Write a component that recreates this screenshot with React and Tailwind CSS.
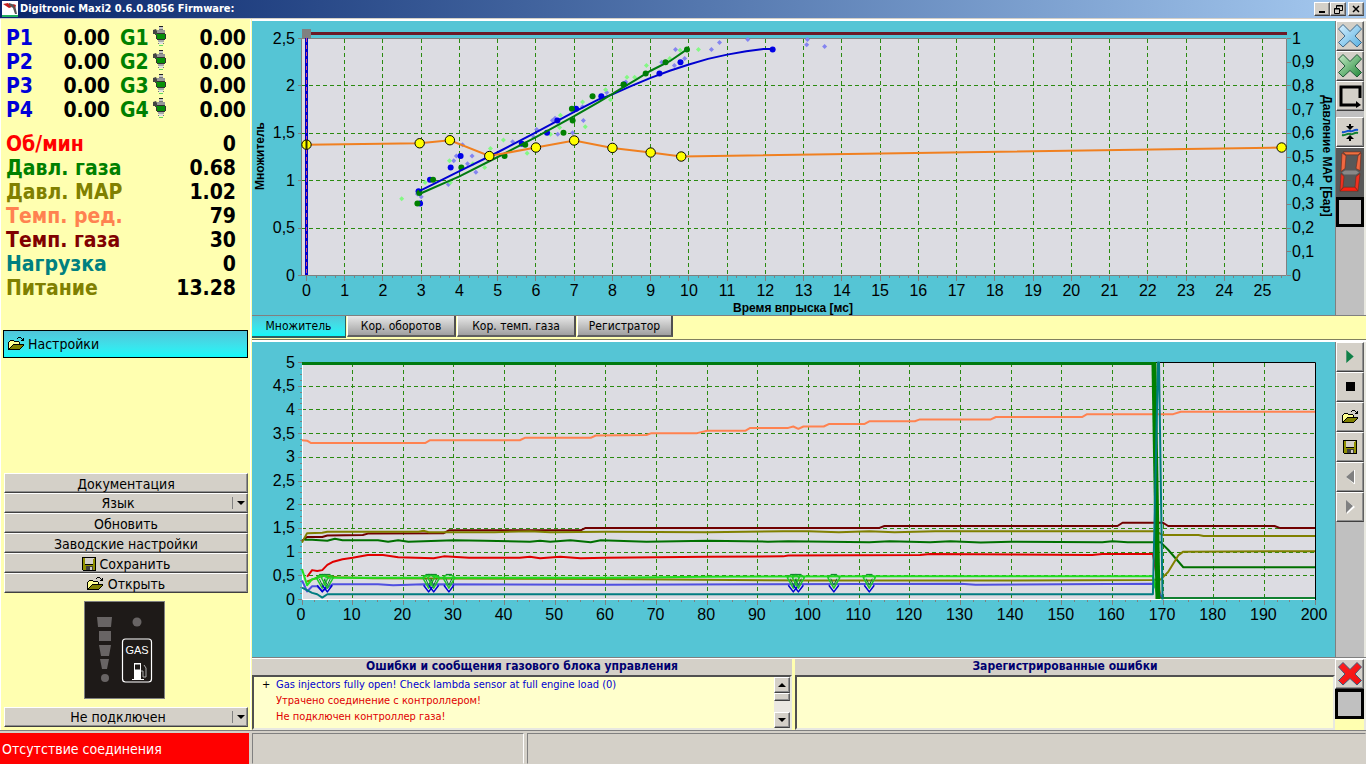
import { useState } from 'react';

const cylinders = [1, 2, 3, 4];

const readings = [
  { label: 'Об/мин', value: '0', color: 'text-[#ff0000]' },
  { label: 'Давл. газа', value: '0.68', color: 'text-[#008000]' },
  { label: 'Давл. MAP', value: '1.02', color: 'text-[#808000]' },
  { label: 'Темп. ред.', value: '79', color: 'text-[#ff8250]' },
  { label: 'Темп. газа', value: '30', color: 'text-[#800000]' },
  { label: 'Нагрузка', value: '0', color: 'text-[#008080]' },
  { label: 'Питание', value: '13.28', color: 'text-[#808000]' },
];

const tabs = [
  { name: 'Множитель', width: 'w-[94px]' },
  { name: 'Кор. оборотов', width: 'w-[109px]' },
  { name: 'Кор. темп. газа', width: 'w-[119px]' },
  { name: 'Регистратор', width: 'w-24' },
];

// Multiplier chart, [injection time, multiplier]
const multiplier = [
  [0, 1.38], [2.96, 1.395], [3.75, 1.427], [4.78, 1.26], [6, 1.35],
  [7, 1.424], [8, 1.346], [9, 1.297], [9.8, 1.255], [25.5, 1.35],
];
const petrolLine = [
  [2.95, 0.89], [4, 1.1], [5, 1.3], [6, 1.51], [7, 1.725], [7.64, 1.857], [8, 1.91],
  [8.5, 2.0], [9, 2.085], [9.5, 2.16], [10, 2.225], [10.5, 2.285], [11, 2.33], [11.5, 2.365], [11.95, 2.39], [12.2, 2.39],
];
const gasLine = [
  [2.95, 0.86], [4, 1.045], [5, 1.25], [6, 1.46], [7, 1.68], [7.64, 1.83],
  [8, 1.915], [8.3, 1.99], [8.6, 2.06], [9, 2.16], [9.5, 2.26], [9.95, 2.385],
];
const petrolDots = [
  [2.97, 0.76], [2.93, 0.89], [3.23, 1.01], [3.77, 1.14], [4.03, 1.26], [5.63, 1.39], [6.29, 1.505],
  [6.56, 1.635], [7.05, 1.758], [7.71, 1.89], [8.3, 2.015], [9.23, 2.13], [9.78, 2.25], [12.19, 2.385],
];
const gasDots = [
  [2.9, 0.76], [2.95, 0.87], [3.31, 1.01], [4.05, 1.14], [5.18, 1.26], [5.72, 1.38], [6.72, 1.505],
  [6.96, 1.635], [6.94, 1.758], [7.48, 1.89], [8.29, 2.015], [8.87, 2.13], [9.39, 2.25], [9.95, 2.385],
];
const petrolRaw = [
  [2.9, 0.86], [3, 0.83], [3.71, 0.96], [3.85, 1.21], [3.92, 1.26], [4.08, 1.38], [4.33, 1.26], [4.21, 1.18],
  [4.43, 1.09], [5.39, 1.41], [5.94, 1.46], [6.02, 1.54], [6.43, 1.635], [6.5, 1.66], [6.57, 1.49], [6.96, 1.505],
  [7.24, 1.635], [7.22, 1.78], [7.85, 1.93], [8.35, 2.04], [9.29, 2.25], [9.62, 2.215], [9.89, 2.29],
  [9.65, 2.385], [10.59, 2.385], [10.8, 2.457], [11.54, 2.49], [13.08, 2.435], [13.1, 2.49], [13.55, 2.415],
];
const gasRaw = [
  [2.49, 0.81], [3.1, 0.98], [3.74, 1.21], [3.76, 0.98], [4.66, 1.14], [4.35, 1.18], [4.81, 1.34], [5.15, 1.43],
  [5.77, 1.29], [6.38, 1.49], [6.62, 1.56], [6.64, 1.69], [7.22, 1.83], [7.29, 1.57], [7.82, 1.96],
  [7.95, 1.855], [8.38, 2.09], [8.58, 2.09], [8.89, 2.215], [9.5, 2.29], [9.77, 2.375], [10.25, 2.385],
];

// Oscilloscope traces, [sample, volts]
const traces = [
  { color: '#ff8250', points: [
    [0, 3.36], [1, 3.35], [1.8, 3.3], [24.3, 3.3], [25.3, 3.36], [32, 3.36], [43, 3.36], [44, 3.41], [57, 3.41],
    [58, 3.46], [68, 3.47], [69, 3.51], [78, 3.51], [80, 3.56], [87.5, 3.56], [88.5, 3.62], [96, 3.62], [97, 3.65],
    [98, 3.6], [99, 3.65], [103, 3.65], [104, 3.7], [111, 3.7], [112, 3.76], [121, 3.76], [122, 3.8], [136, 3.8],
    [137, 3.85], [154, 3.85], [155, 3.91], [172, 3.91], [173.5, 3.96], [200, 3.96],
  ] },
  { color: '#700000', points: [
    [0, 1.24], [1, 1.32], [4, 1.32], [5, 1.35], [12, 1.36], [13, 1.39], [28, 1.4], [29, 1.46], [55, 1.46],
    [56, 1.51], [114, 1.51], [115, 1.55], [161, 1.55], [162, 1.62], [170, 1.62], [171, 1.55], [192, 1.55],
    [193, 1.51], [200, 1.51],
  ] },
  { color: '#808000', points: [
    [0, 1.2], [1, 1.4], [4, 1.41], [5, 1.43], [23, 1.43], [24, 1.45], [25, 1.42], [38, 1.42], [45, 1.44], [49, 1.42],
    [60, 1.43], [80, 1.42], [95, 1.44], [100, 1.44], [106, 1.42], [112, 1.44], [117, 1.42], [125, 1.44],
    [168.5, 1.44], [170, 1.36], [177, 1.36], [178, 1.34], [200, 1.34],
  ] },
  { color: '#007000', points: [
    [0.5, 1.26], [2, 1.26], [5, 1.24], [6.5, 1.28], [8, 1.25], [15, 1.25], [17, 1.22], [19, 1.25], [21, 1.22],
    [30, 1.25], [36, 1.24], [45, 1.22], [47, 1.24], [49, 1.22], [53, 1.25], [57, 1.21], [59, 1.25], [68, 1.22],
    [80, 1.24], [92, 1.22], [96, 1.23], [112, 1.21], [116, 1.23], [124, 1.21], [128, 1.23], [134, 1.2],
    [140, 1.22], [158, 1.21], [160, 1.23], [163, 1.21], [168, 1.21], [169.5, 1.21], [171, 1.05], [174, 0.68], [200, 0.68],
  ] },
  { color: '#e00000', points: [
    [1, 0.48], [2, 0.62], [3, 0.6], [4, 0.62], [5, 0.73], [6, 0.79], [8, 0.85], [10, 0.88], [13, 0.94], [16, 0.94],
    [19, 0.89], [26, 0.87], [28, 0.91], [33, 0.88], [43, 0.88], [45, 0.9], [47, 0.87], [51, 0.9], [55, 0.87],
    [60, 0.88], [80, 0.9], [95, 0.91], [96, 0.93], [122, 0.94], [124, 0.96], [156, 0.94], [158, 0.96], [168, 0.96], [169.5, 0.03],
  ] },
  { color: '#808000', points: [
    [1, 0.38], [2, 0.42], [4, 0.5], [7, 0.47], [14, 0.45], [60, 0.43], [100, 0.4], [140, 0.4], [168, 0.41],
    [169.5, 0.42], [171, 0.58], [173, 0.93], [174, 1.01], [200, 1.02],
  ] },
  { color: '#5050e0', points: [
    [0, 0.4], [1, 0.17], [2, 0.28], [3, 0.28], [4, 0.18], [6, 0.32], [15, 0.32], [18, 0.3], [24, 0.32], [60, 0.31],
    [90, 0.32], [130, 0.33], [133, 0.31], [168, 0.33], [170, 0.02],
  ] },
  { color: '#20e020', points: [
    [0, 0.64], [1, 0.3], [2, 0.43], [3, 0.45], [4, 0.52], [5, 0.46], [24, 0.46], [25, 0.52], [26, 0.5], [27, 0.46],
    [60, 0.46], [80, 0.48], [120, 0.49], [168, 0.49], [169, 0.02],
  ] },
  { color: '#108030', points: [[169.5, 0.03], [200, 0.03]] },
];

const dropouts = [4, 5, 25, 26, 29, 97, 98, 105, 112];

const range = (from, to, step) => {
  const out = [];
  for (let i = 0; from + i * step <= to + step / 10; i++) out.push(from + i * step);
  return out;
};

const comma = (n) => String(Math.round(n * 10) / 10).replace('.', ',');

const toPoints = (data, x, y) => data.map(([a, b]) => `${x(a)},${y(b)}`).join(' ');

// keeps one pixel wide lines on whole pixels
const snap = (n) => Math.floor(n) + 0.5;

const MultiplierChart = () => {
  const x = (v) => 54.5 + v * 38.24;
  const y = (v) => 254.5 - v * 94.8;

  return (
    <svg viewBox="0 0 1083 294" className="block w-full bg-[#55c5d5]" fontFamily="'Liberation Sans', Arial, sans-serif" fontSize="16" role="img" aria-label="Множитель">
      <rect x="50" y="17" width="985" height="238" fill="#dcdce2" />
      <g stroke="#2a8a10" strokeDasharray="4 3">
        {range(1, 25, 1).map((v) => <line key={v} x1={snap(x(v))} x2={snap(x(v))} y1="18" y2="254" />)}
        {range(0.5, 2, 0.5).map((v) => <line key={v} x1="50" x2="1034" y1={snap(y(v))} y2={snap(y(v))} />)}
      </g>
      <g stroke="#808080">
        <path d="M49.5 17.5H1034.5V254.5H49.5Z" fill="none" />
        {range(0, 25.5, 0.25).map((v) => <line key={v} x1={snap(x(v))} x2={snap(x(v))} y1="255" y2={v % 1 ? 257 : 260} />)}
        {range(0, 2.5, 0.5).map((v) => <line key={v} x1="46" x2="50" y1={snap(y(v))} y2={snap(y(v))} />)}
        {range(0, 1, 0.1).map((v) => <line key={v} x1="1035" x2="1039" y1={snap(y(v * 2.5))} y2={snap(y(v * 2.5))} />)}
      </g>
      <g fill="#000">
        {range(0, 25, 1).map((v) => <text key={v} x={x(v)} y="275" textAnchor="middle">{v}</text>)}
        {range(0, 2.5, 0.5).map((v) => <text key={v} x="43" y={y(v) + 5} textAnchor="end">{comma(v)}</text>)}
        {range(0, 1, 0.1).map((v) => <text key={v} x="1040" y={y(v * 2.5) + 5}>{comma(v)}</text>)}
        <g fontSize="12" fontWeight="bold" textAnchor="middle">
          <text x="541" y="291">Время впрыска [мс]</text>
          <text transform="translate(12 135) rotate(-90)">Множитель</text>
          <text transform="translate(1071 135) rotate(90)">Давление MAP [Бар]</text>
        </g>
      </g>
      <rect x="50" y="11" width="985" height="3" fill="#6b1a26" />
      <line x1="54.5" x2="54.5" y1="17" y2="254" stroke="#0000c8" strokeWidth="3" />
      <line x1="54.5" x2="54.5" y1="17" y2="254" stroke="#d05080" strokeDasharray="4 3" />
      <rect x="50" y="8" width="9" height="9" fill="#808080" />
      {petrolRaw.map(([a, b], i) => <path key={i} d={`M${x(a) - 2.5} ${y(b)}l2.5-2.5 2.5 2.5-2.5 2.5z`} fill="#8484f0" />)}
      {gasRaw.map(([a, b], i) => <path key={i} d={`M${x(a) - 2.5} ${y(b)}l2.5-2.5 2.5 2.5-2.5 2.5z`} fill="#84f884" />)}
      {petrolDots.map(([a, b], i) => <circle key={i} cx={x(a)} cy={y(b)} r="3" fill="#0000e8" />)}
      {gasDots.map(([a, b], i) => <circle key={i} cx={x(a)} cy={y(b)} r="3" fill="#008000" />)}
      <g fill="none" strokeWidth="2">
        <polyline points={toPoints(petrolLine, x, y)} stroke="#0000d0" />
        <polyline points={toPoints(gasLine, x, y)} stroke="#007a10" />
        <polyline points={toPoints(multiplier, x, y)} stroke="#f08020" />
      </g>
      {multiplier.map(([a, b], i) => <circle key={i} cx={x(a)} cy={y(b)} r="4.7" fill="#ffff00" stroke="#000" />)}
      <line x1="54.5" x2="54.5" y1="119" y2="128" stroke="#303000" strokeWidth="2" />
    </svg>
  );
};

const ScopeChart = () => {
  const x = (v) => 50 + v * 5.065;
  const y = (v) => 257.5 - v * 47.4;

  return (
    <svg viewBox="0 0 1083 315" className="block w-full bg-[#55c5d5]" fontFamily="'Liberation Sans', Arial, sans-serif" fontSize="16" role="img" aria-label="Осциллограф">
      <rect x="50" y="20" width="1014" height="237" fill="#dcdce2" />
      <g stroke="#2a8a10" strokeDasharray="4 3">
        {range(10, 190, 10).map((v) => <line key={v} x1={snap(x(v))} x2={snap(x(v))} y1="21" y2="257" />)}
        {range(0.5, 4.5, 0.5).map((v) => <line key={v} x1="50" x2="1063" y1={snap(y(v))} y2={snap(y(v))} />)}
      </g>
      <g stroke="#808080">
        {range(0, 200, 2.5).map((v) => <line key={v} x1={snap(x(v))} x2={snap(x(v))} y1="258" y2={v % 10 ? 260 : 263} />)}
        {range(0, 5, 0.125).map((v) => <line key={v} x1={v % 0.5 ? 48 : 46} x2="50" y1={snap(y(v))} y2={snap(y(v))} />)}
      </g>
      <path d="M50.5 20V257.5H1063" stroke="#fff" fill="none" />
      <path d="M50 20.5H1063.5V258" stroke="#000" fill="none" />
      <g fill="#000">
        {range(0, 200, 10).map((v) => <text key={v} x={x(v) - 1} y="278" textAnchor="middle">{v}</text>)}
        {range(0, 5, 0.5).map((v) => <text key={v} x="43" y={y(v) + 5} textAnchor="end">{comma(v)}</text>)}
      </g>
      <g fill="none" strokeWidth="2" strokeLinejoin="round">
        {traces.map((t, i) => <polyline key={i} points={toPoints(t.points, x, y)} stroke={t.color} />)}
        {dropouts.map((v) => (
          <g key={v} strokeWidth="1.5">
            <path d={`M${x(v) - 5} ${y(0.3)}L${x(v)} ${y(0.16)}L${x(v) + 5} ${y(0.3)}`} stroke="#0000d0" />
            <path d={`M${x(v) - 6} ${y(0.46)}l4-3h4l4 3L${x(v)} ${y(0.24)}Z`} stroke="#20c828" />
            <path d={`M${x(v) - 3} ${y(0.44)}L${x(v)} ${y(0.3)}L${x(v) + 3} ${y(0.44)}M${x(v) - 3} ${y(0.53)}h6`} stroke="#108030" strokeWidth="1" />
          </g>
        ))}
        <path d={`M50 21.5H${x(168.3)}`} stroke="#007a10" strokeWidth="3" />
        <path d={`M${x(168.2)} 20L${x(169)} 257`} stroke="#008000" strokeWidth="5" />
        <polyline points={toPoints([[0, 0.25], [2, 0.14], [3, 0.11], [4, 0.04], [5, 0.11], [168, 0.11], [169, 5], [169.2, 5], [169.9, 0]], x, y)} stroke="#007c80" />
      </g>
    </svg>
  );
};

const Injector = () => (
  <svg viewBox="0 0 14 22" className="h-[22px] w-[14px]" aria-hidden="true">
    <path d="M6 0h4v4H6z" fill="#c8c8c8" />
    <path d="M6 0h4v1H6z" fill="#222" />
    <path d="M6 3h4v1H6z" fill="#777" />
    <path d="M0 4l3-1 1 2h1v4H2V8H0z" fill="#444" />
    <path d="M4 4h8v3H4z" fill="#989898" />
    <path d="M4 7h8v1H4z" fill="#333" />
    <path d="M3 8h10v5H3z" fill="#089008" />
    <path d="M3 9h1v4H3zM12 8h1v5h-1zM4 13h8v1H4z" fill="#333" />
    <path d="M5 14h6v2H5z" fill="#a8a8a8" />
    <path d="M6 16h4v2H6z" fill="#e0e0e0" />
    <path d="M5 17h1v1H5zM10 17h1v1h-1z" fill="#777" />
    <path d="M6 19h4v1H6z" fill="#60d860" />
  </svg>
);

const FolderIcon = () => (
  <svg viewBox="0 0 17 14" className="h-[14px] w-[17px] shrink-0" aria-hidden="true" shapeRendering="crispEdges">
    <path d="M1 4h1V3h4v1h5v3H5v1H4v2H3v2H1z" fill="#ffff90" />
    <path d="M5 8h11v1h-1v1h-1v1h-1v1h-1v1H1v-1h1v-1h1v-1h1V9h1z" fill="#808000" />
    <path d="M2 3h4v1H2zM6 4h5v1H6zM1 4h1v1H1zM0 5h1v8H0zM11 5h1v2h-1zM5 7h11v1H5zM4 8h1v1H4zM3 9h1v1H3zM2 10h1v1H2zM1 11h1v1H1zM15 8h1v1h-1zM14 9h1v1h-1zM13 10h1v1h-1zM12 11h1v1h-1zM1 12h11v1H1z" fill="#000" />
    <path d="M10 0h3v1h-3zM9 1h1v1H9zM13 1h1v1h-1zM15 1h1v3h-3V3h1V2h1z" fill="#000" />
  </svg>
);

const FloppyIcon = () => (
  <svg viewBox="0 0 14 14" className="h-[14px] w-[14px] shrink-0" aria-hidden="true" shapeRendering="crispEdges">
    <path d="M0 0h14v14H1v-1H0z" fill="#000" />
    <path d="M1 1h2v7h8V2h1V1h1v12H1z" fill="#909000" />
    <path d="M3 1h8v6H3z" fill="#d4d0c8" />
    <path d="M11 1h1v1h-1z" fill="#d4d0c8" />
    <path d="M4 9h7v4H4z" fill="#404040" />
    <path d="M8 10h2v3H8z" fill="#d4d0c8" />
  </svg>
);

const Cross = ({ id, light, dark, stroke }) => (
  <svg viewBox="0 0 26 26" className="h-[26px] w-[26px]" aria-hidden="true">
    <defs>
      <linearGradient id={id} x1="0" y1="0" x2="1" y2="1">
        <stop offset="0" stopColor={light} />
        <stop offset="1" stopColor={dark} />
      </linearGradient>
    </defs>
    <path d="M6 1.500l7 7 7-7 4.500 4.500-6.500 7 6.500 6.500-4.500 4.500-7-6.500-7 6.500L1.500 19.500 8 13 1.500 6z" fill={`url(#${id})`} stroke={stroke} strokeLinejoin="round" />
  </svg>
);

const raised = 'border border-t-white border-l-white border-r-[#606060] border-b-[#404040] bg-[#d4d0c8] shadow-[inset_-1px_-1px_0_#909090]';

const ToolButton = ({ label, children, className = '' }) => (
  <button type="button" aria-label={label} className={`flex h-[30px] w-full shrink-0 items-center justify-center pb-px ${raised} ${className}`}>
    {children}
  </button>
);

const Indicator = () => <div className="h-[30px] w-full shrink-0 border-[3px] border-black bg-[#c0c0c0]" />;

const SideButton = ({ children }) => (
  <button type="button" className={`flex h-5 w-full items-center justify-center gap-1 pt-0.5 ${raised}`}>
    {children}
  </button>
);

const SideSelect = ({ label, value }) => (
  <div className="relative">
    <select aria-label={label} className={`block h-5 w-full appearance-none rounded-none pr-4 text-center leading-4 ${raised}`}>
      <option>{value}</option>
    </select>
    <div className="pointer-events-none absolute inset-y-1 right-0 flex w-4 items-center justify-center border-l border-[#808080]">
      <div className="border-x-4 border-t-4 border-x-transparent border-t-black" />
    </div>
  </div>
);

const GasSwitch = () => (
  <svg viewBox="0 0 81 98" className="block h-[98px] w-[81px]" fontFamily="'Liberation Sans', Arial, sans-serif" role="img" aria-label="GAS">
    <rect x=".5" y=".5" width="80" height="97" fill="#1e1a18" stroke="#808080" />
    <g fill="#686464">
      <path d="M13 16h15l-1 10H14zM15 30h12v10H15zM15 44h12l-2 11h-8zM16 58h9l-2 10h-5z" />
      <circle cx="21" cy="77" r="4" />
      <circle cx="53" cy="21" r="4.500" />
    </g>
    <rect x="38.500" y="38" width="29" height="43" rx="3" fill="none" stroke="#fff" strokeWidth="1.200" />
    <text x="53" y="53" fill="#fff" fontSize="11" textAnchor="middle">GAS</text>
    <path d="M50 62h7v16h-7z" fill="#fff" />
    <path d="M51 63.500h5v5h-5z" fill="#1e1a18" />
    <path d="M48 78h12v1H48z" fill="#fff" />
    <path d="M57 70h2v6h3V67l-2-3" fill="none" stroke="#aaa" />
  </svg>
);

const Sidebar = () => (
  <aside className="flex w-[250px] shrink-0 flex-col border-l border-white bg-[#ffffb0] text-sm">
    <div className="grid grid-cols-[50px_54px_44px_1fr] pl-[5px] pr-1 pt-[7px] text-[21px] leading-6 font-bold">
      {cylinders.map((n) => (
        <div key={n} className="contents">
          <span className="text-[#0000d8]">P{n}</span>
          <span className="text-right">0.00</span>
          <span className="flex pl-[10px] text-[#008000]">G{n}<span className="ml-1"><Injector /></span></span>
          <span className="text-right">0.00</span>
        </div>
      ))}
    </div>
    <dl className="mt-[10px] pl-[5px] pr-[14px] text-[21px] leading-6 font-bold">
      {readings.map((r) => (
        <div key={r.label} className="flex justify-between">
          <dt className={r.color}>{r.label}</dt>
          <dd>{r.value}</dd>
        </div>
      ))}
    </dl>
    <button type="button" className="mx-0.5 mt-[30px] flex h-7 items-center gap-[3px] border border-black bg-linear-to-b from-[#50c4d8] to-[#10fafa] pl-1">
      <FolderIcon />
      Настройки
    </button>
    <div className="mt-auto pr-0.5 pl-[3px]">
      <SideButton>Документация</SideButton>
      <SideSelect label="Язык" value="Язык" />
      <SideButton>Обновить</SideButton>
      <SideButton>Заводские настройки</SideButton>
      <SideButton><FloppyIcon />Сохранить</SideButton>
      <SideButton><FolderIcon />Открыть</SideButton>
      <div className="flex justify-center py-2 pr-1"><GasSwitch /></div>
      <div className="mb-[3px]">
        <SideSelect label="Соединение" value="Не подключен" />
      </div>
    </div>
  </aside>
);

const MessagePanel = ({ title, children }) => (
  <section className="flex min-w-0 flex-1 flex-col bg-[#d4d0c8]">
    <h2 className="h-4 text-center text-xs leading-[14px] font-bold text-[#000070]">{title}</h2>
    <div className="flex flex-1 border-2 border-t-[#505050] border-l-[#505050] border-r-[#e8e8e0] border-b-[#e8e8e0] bg-[#ffffcc]">
      {children}
    </div>
  </section>
);

export default function App() {
  const [activeTab, setActiveTab] = useState('Множитель');

  return (
    <div className="flex min-h-screen flex-col bg-[#d4d0c8] font-['DejaVu_Sans_Condensed',Tahoma,'Noto_Sans',sans-serif] text-black">
      <header className="flex h-[18px] items-center gap-0.5 bg-linear-to-r from-[#0a246a] to-[#a6caf0] px-0.5">
        <svg viewBox="0 0 16 16" className="h-4 w-4" aria-hidden="true">
          <path d="M0 0h16v16H0z" fill="#fff" />
          <path d="M1 3l5-1 4 4-3 1z" fill="#c02020" />
          <path d="M7 2l6 2 2 9h-2l-2-6-4-3z" fill="#555" />
          <path d="M11 3l3 1-1 3z" fill="#c02020" />
          <path d="M0 14h16v2H0z" fill="#20b060" />
        </svg>
        <h1 className="flex-1 text-[11px] leading-4 font-bold text-white">Digitronic Maxi2 0.6.0.8056 Firmware:</h1>
        <div className="flex">
          <button type="button" aria-label="Свернуть" className={`flex h-[14px] w-4 items-end pb-0.5 pl-1 ${raised}`}>
            <span className="h-0.5 w-1.5 bg-black" />
          </button>
          <button type="button" aria-label="Восстановить" className={`flex h-[14px] w-4 items-center justify-center ${raised}`}>
            <svg viewBox="0 0 9 9" className="h-[9px] w-[9px]" fill="none" stroke="#000"><path d="M2.500 3V.5h6v5H6M2.500 1h6M.5 3.500h5v5h-5zM.5 4h5" /></svg>
          </button>
          <button type="button" aria-label="Закрыть" className={`ml-0.5 flex h-[14px] w-4 items-center justify-center ${raised}`}>
            <svg viewBox="0 0 8 8" className="h-2 w-2" stroke="#000" strokeWidth="1.500"><path d="M1 1l6 6M7 1L1 7" /></svg>
          </button>
        </div>
      </header>

      <div className="flex flex-1 border-t border-[#d4d0c8]">
        <Sidebar />
        <main className="flex min-w-0 flex-1 flex-col border-l border-white bg-[#ffffb0] pl-px">
          <div className="flex border-t-2 border-b border-t-white border-b-[#808080]">
            <div className="min-w-0 flex-1"><MultiplierChart /></div>
            <div className="flex w-[31px] shrink-0 flex-col border-r-2 border-l border-r-[#e8e8e0] border-l-[#808080] bg-[#c0c0c0]">
              <ToolButton label="Удалить точки бензина"><Cross id="petrol-cross" light="#d8f0ff" dark="#58b0e0" stroke="#406888" /></ToolButton>
              <ToolButton label="Удалить точки газа"><Cross id="gas-cross" light="#c8ecc8" dark="#208838" stroke="#205838" /></ToolButton>
              <ToolButton label="Сбор карты">
                <svg viewBox="0 0 24 24" className="h-6 w-6" fill="none" stroke="#000" strokeWidth="3"><path d="M22 14V3H3v18h16" /><path d="M18 17l5 4-5 3z" fill="#000" stroke="none" /></svg>
              </ToolButton>
              <ToolButton label="Автонастройка" className="mt-[6px]">
                <svg viewBox="0 0 18 18" className="h-[18px] w-[18px]" fill="none" strokeWidth="2">
                  <path d="M1 12c4 1 5-2 8-1s4-2 8-1" stroke="#108030" />
                  <path d="M1 9c4 1 5-2 8-1s4-2 8-1" stroke="#1050d0" />
                  <path d="M9 7L5 3h3V1h2v2h3zM9 12l-4 4h3v2h2v-2h3z" fill="#000" />
                </svg>
              </ToolButton>
              <svg viewBox="0 0 28 50" className="block h-[50px] w-full shrink-0 border-t border-white bg-[#585858]" preserveAspectRatio="none" aria-hidden="true">
                <g stroke="#702818" strokeWidth=".6">
                  <path d="M7 4h18l-3 3H10z" fill="#f07040" />
                  <path d="M6 5l4 3-1 13-4 3zM25 5l-1 18-4-2 2-13z" fill="#f06840" />
                  <path d="M5 26l3 3-1 11-3 4zM24 26l-2 18-3-4 1-11z" fill="#f03020" />
                  <path d="M4 44l4-4h11l3 4z" fill="#ff2010" />
                </g>
                <path d="M6 25l3-2h11l3 2-3 2H8z" fill="#888" />
              </svg>
              <Indicator />
            </div>
          </div>

          <nav className="flex h-6 items-start border-b border-[#808060] text-xs">
            {tabs.map(({ name, width }) => (
              <button
                key={name}
                type="button"
                onClick={() => setActiveTab(name)}
                className={`${width} ${name === activeTab
                  ? 'mr-px h-[22px] border-r border-b-2 border-[#306060] bg-linear-to-b from-[#50c8d8] to-[#10f8f8]'
                  : 'mr-px h-[21px] border-r-2 border-b-2 border-l border-r-[#505050] border-b-[#606060] border-l-white bg-linear-to-b from-[#e8e8e8] to-[#a0a0a0]'}`}
              >
                {name}
              </button>
            ))}
          </nav>

          <div className="flex border-t-2 border-b border-t-white border-b-[#808080]">
            <div className="min-w-0 flex-1"><ScopeChart /></div>
            <div className="flex w-[31px] shrink-0 flex-col border-r-2 border-l border-r-[#e8e8e0] border-l-[#808080] bg-[#c0c0c0]">
              <ToolButton label="Пуск"><svg viewBox="0 0 8 14" className="h-[13px] w-2"><path d="M0 0l8 7-8 7z" fill="#108048" /></svg></ToolButton>
              <ToolButton label="Стоп"><span className="h-[9px] w-[9px] bg-black" /></ToolButton>
              <ToolButton label="Открыть"><FolderIcon /></ToolButton>
              <ToolButton label="Сохранить"><FloppyIcon /></ToolButton>
              <ToolButton label="Назад"><svg viewBox="0 0 9 14" className="h-[14px] w-[9px]"><path d="M8 0v14h1V0zM8 0L0 7l8 7z" fill="#fff" /><path d="M8 0L0 7l8 6z" fill="#808080" /></svg></ToolButton>
              <ToolButton label="Вперёд"><svg viewBox="0 0 9 14" className="h-[14px] w-[9px]"><path d="M1 1l8 6-8 7z" fill="#fff" /><path d="M0 0l7 6-7 7z" fill="#808080" /></svg></ToolButton>
            </div>
          </div>

          <div className="flex h-[72px] border-t border-white">
            <MessagePanel title="Ошибки и сообщения газового блока управления">
              <ul className="flex-1 text-[11px] leading-4 text-[#e00000]">
                <li className="flex text-[#0000d0]"><span className="w-[22px] pl-2 text-black">+</span>Gas injectors fully open! Check lambda sensor at full engine load (0)</li>
                <li className="pl-[22px]">Утрачено соединение с контроллером!</li>
                <li className="pl-[22px]">Не подключен контроллер газа!</li>
              </ul>
              <div className="flex w-4 flex-col bg-[#ebe8e2]">
                <button type="button" aria-label="Вверх" className={`flex h-4 items-center justify-center ${raised}`}>
                  <span className="border-x-4 border-b-4 border-x-transparent border-b-black" />
                </button>
                <div className={`h-2 ${raised}`} />
                <button type="button" aria-label="Вниз" className={`mt-auto flex h-4 items-center justify-center ${raised}`}>
                  <span className="border-x-4 border-t-4 border-x-transparent border-t-black" />
                </button>
              </div>
            </MessagePanel>
            <div className="w-[3px]" />
            <MessagePanel title="Зарегистрированные ошибки" />
            <div className="flex w-[31px] shrink-0 flex-col border-r-2 border-[#e8e8e0]">
              <ToolButton label="Удалить ошибки"><Cross id="error-cross" light="#ff2020" dark="#f01010" stroke="#405878" /></ToolButton>
              <Indicator />
            </div>
          </div>
        </main>
      </div>

      <footer className="flex h-[34px] gap-[3px] border-t border-[#808080] pt-0.5 text-sm">
        <div className="flex w-[249px] items-center bg-[#ff0000] pl-0.5 text-white">Отсутствие соединения</div>
        <div className="w-[272px] border border-[#808080] border-r-white border-b-transparent" />
        <div className="flex-1 border border-[#808080] border-r-transparent border-b-transparent" />
      </footer>
    </div>
  );
}
